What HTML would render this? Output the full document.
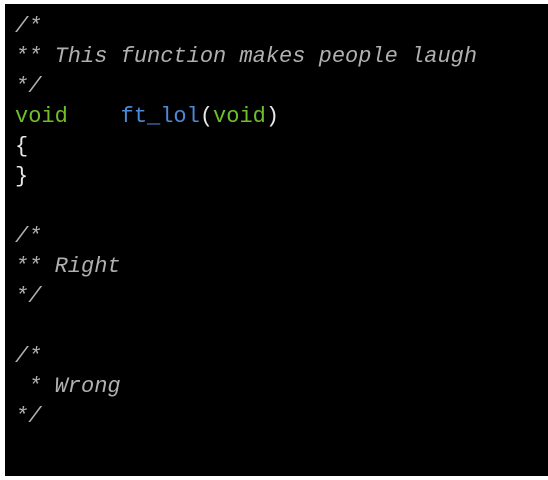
<!DOCTYPE html>
<html><head><style>
html,body{margin:0;padding:0;background:#fff;width:548px;height:480px;overflow:hidden}
.box{position:absolute;left:5px;top:4px;width:543px;height:472px;background:#000}
pre{margin:0;position:absolute;left:15px;top:12px;font-family:"Liberation Mono",monospace;font-size:22px;line-height:30px;color:#e8e8e8}
.c{color:#b0b0b0;font-style:italic}
.k{color:#6fbf2a}
.f{color:#4a8ad8}
</style></head><body>
<div class="box"></div>
<pre><span class="c">/*
** This function makes people laugh
*/</span>
<span class="k">void</span>    <span class="f">ft_lol</span>(<span class="k">void</span>)
{
}

<span class="c">/*
** Right
*/</span>

<span class="c">/*
 * Wrong
*/</span></pre>
</body></html>
